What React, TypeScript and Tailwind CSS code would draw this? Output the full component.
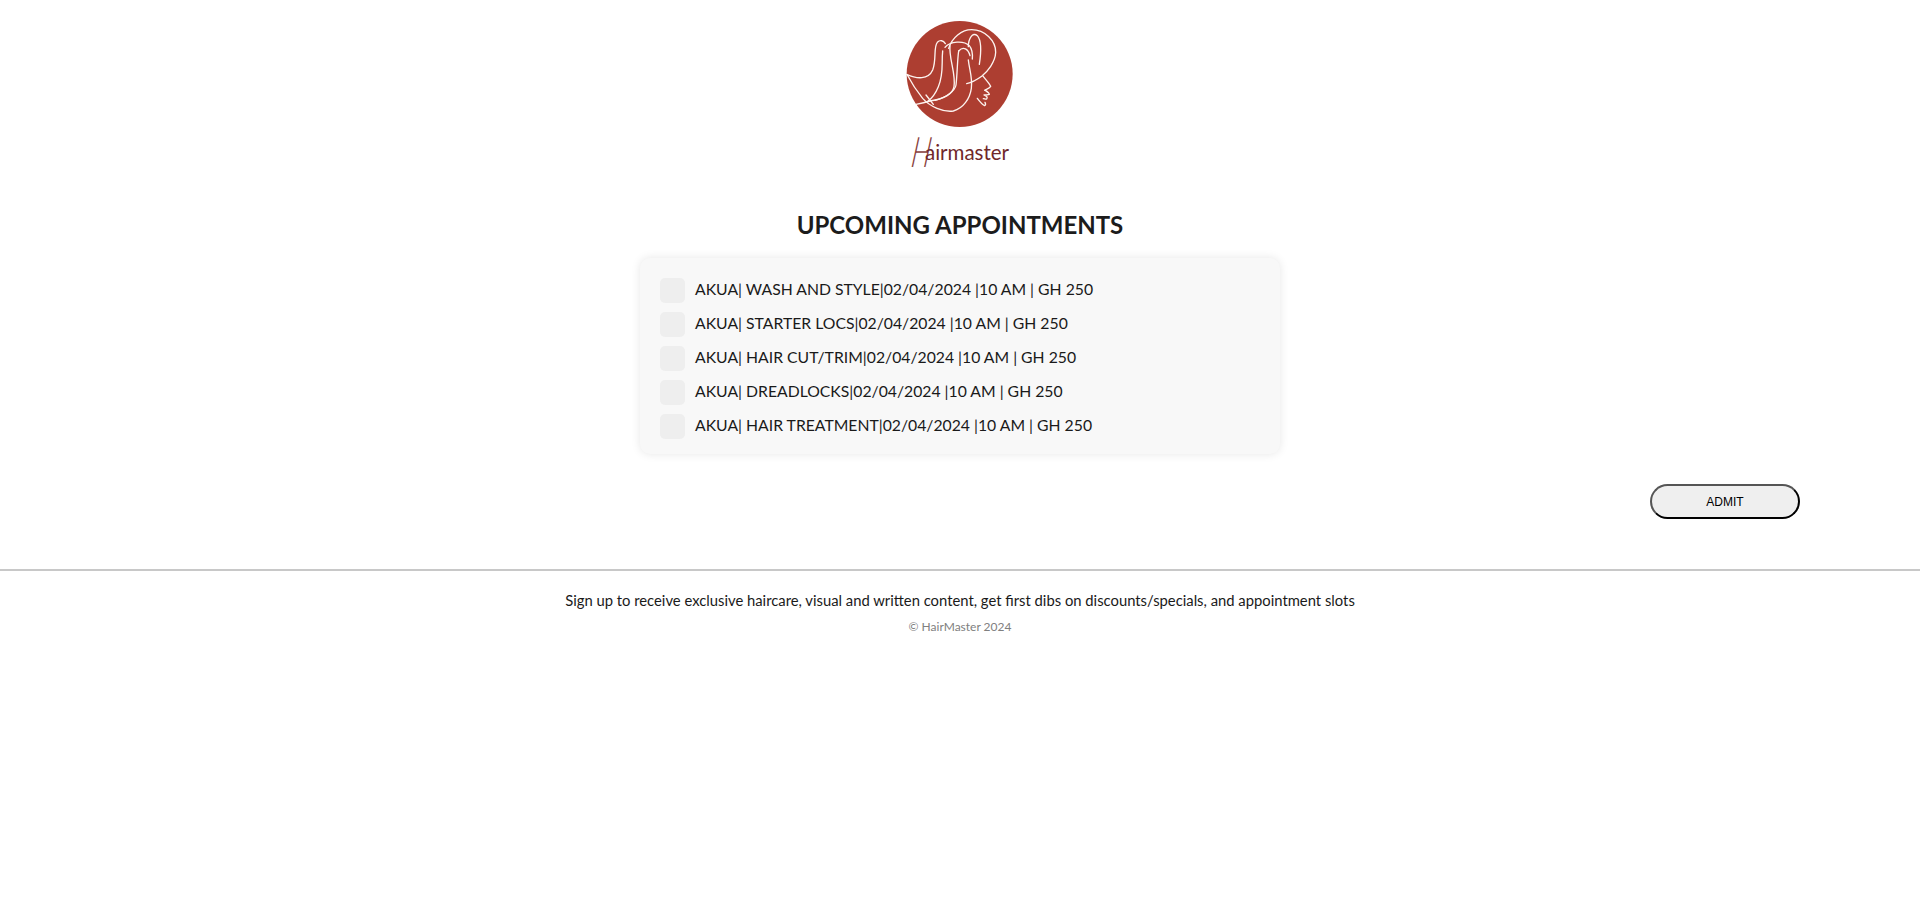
const rows = [
  "AKUA| WASH AND STYLE|02/04/2024 |10 AM | GH 250",
  "AKUA| STARTER LOCS|02/04/2024 |10 AM | GH 250",
  "AKUA| HAIR CUT/TRIM|02/04/2024 |10 AM | GH 250",
  "AKUA| DREADLOCKS|02/04/2024 |10 AM | GH 250",
  "AKUA| HAIR TREATMENT|02/04/2024 |10 AM | GH 250",
];

const LogoMark = () => (
  <svg viewBox="0 0 360 345" className="w-[120px] h-[115px] block" fill="none">
    <circle cx="179" cy="177" r="159" fill="#ad3e31" />
    <g stroke="#fdf3ef" strokeWidth="4" strokeLinecap="round" strokeLinejoin="round">
      <path d="M20 178C50 192 85 195 98 165C110 135 100 95 112 82C120 74 130 76 136 86" />
      <path d="M146 100C156 68 185 44 215 44C255 44 288 78 287 112C286 142 262 170 245 184C230 195 215 203 200 206" />
      <path d="M248 182C258 195 268 205 272 214C268 221 258 222 254 226" />
      <path d="M256 226C262 230 268 234 268 238C262 240 256 240 252 240C260 244 264 246 260 252C257 254 254 251 250 251" />
      <path d="M232 250C238 258 246 268 254 272C258 270 257 266 255 262" />
      <path d="M205 95C205 70 218 50 232 62C246 78 244 110 238 148" />
      <path d="M135 97C150 78 192 76 208 92C218 104 218 120 217 132" />
      <path d="M176 108C190 92 205 102 210 122" />
      <path d="M205 135C208 165 218 185 214 220C210 250 190 280 160 288C130 292 90 275 68 250C50 228 35 205 22 180" />
      <path d="M150 92C146 130 168 175 162 215C158 240 130 252 90 258C78 262 60 266 48 268" />
      <path d="M128 108C124 145 132 175 115 215C108 232 98 248 84 258" />
      <path d="M176 108C172 135 172 175 168 210C165 228 140 246 105 256" />
      <path d="M78 240L100 268" />
    </g>
  </svg>
);

const Logo = () => (
  <div className="flex flex-col items-center">
    <LogoMark />
    <div className="relative h-[36px] w-[100px] mt-[2px]">
      <span className="absolute left-[-3px] top-[0px] text-[42px] leading-[38px] italic font-light -skew-x-12 scale-x-[0.65] text-[#8a3f3d] font-['Lato',sans-serif]">
        H
      </span>
      <span className="absolute left-[15px] top-[7px] text-[20.5px] leading-[26px] text-[#70282a] font-['Lato',sans-serif]">
        airmaster
      </span>
    </div>
  </div>
);

export default function App() {
  return (
    <div className="min-h-[919px] bg-white font-['Lato',sans-serif] text-[#1a1a1a]">
      <header className="pt-[15px] flex justify-center">
        <Logo />
      </header>

      <h1 className="mt-[41px] text-center text-[24px] leading-[32px] font-bold text-[#1c1c1c]">
        UPCOMING APPOINTMENTS
      </h1>

      <section className="mt-[17px] mx-auto w-[640px] h-[196px] rounded-[10px] bg-[#f8f8f8] shadow-[0_0_10px_rgba(0,0,0,0.1)] px-[20px] pt-[20px]">
        <ul className="flex flex-col gap-[9px]">
          {rows.map((row) => (
            <li key={row} className="flex items-center gap-[10px] h-[25px]">
              <span className="w-[25px] h-[25px] rounded-[5px] bg-[#eeeeee] shrink-0" />
              <span className="text-[15.75px] leading-[20px] relative top-[-2px]">{row}</span>
            </li>
          ))}
        </ul>
      </section>

      <div className="mt-[30px] flex justify-end pr-[120px]">
        <button className="w-[150px] h-[35px] rounded-[20px] border-2 border-t-[#555555] border-l-[#555555] border-r-black border-b-black bg-[#efefef] text-[12px] text-black font-['Liberation_Sans',sans-serif]">
          ADMIT
        </button>
      </div>

      <hr className="mt-[50px] border-0 border-t-2 border-[#c8c8c8]" />

      <footer className="text-center pt-[19px]">
        <p className="text-[14.8px] leading-[20px]">
          Sign up to receive exclusive haircare, visual and written content, get first dibs on discounts/specials, and appointment slots
        </p>
        <p className="mt-[10px] text-[12px] leading-[14px] text-[#808080]">© HairMaster 2024</p>
      </footer>
    </div>
  );
}
